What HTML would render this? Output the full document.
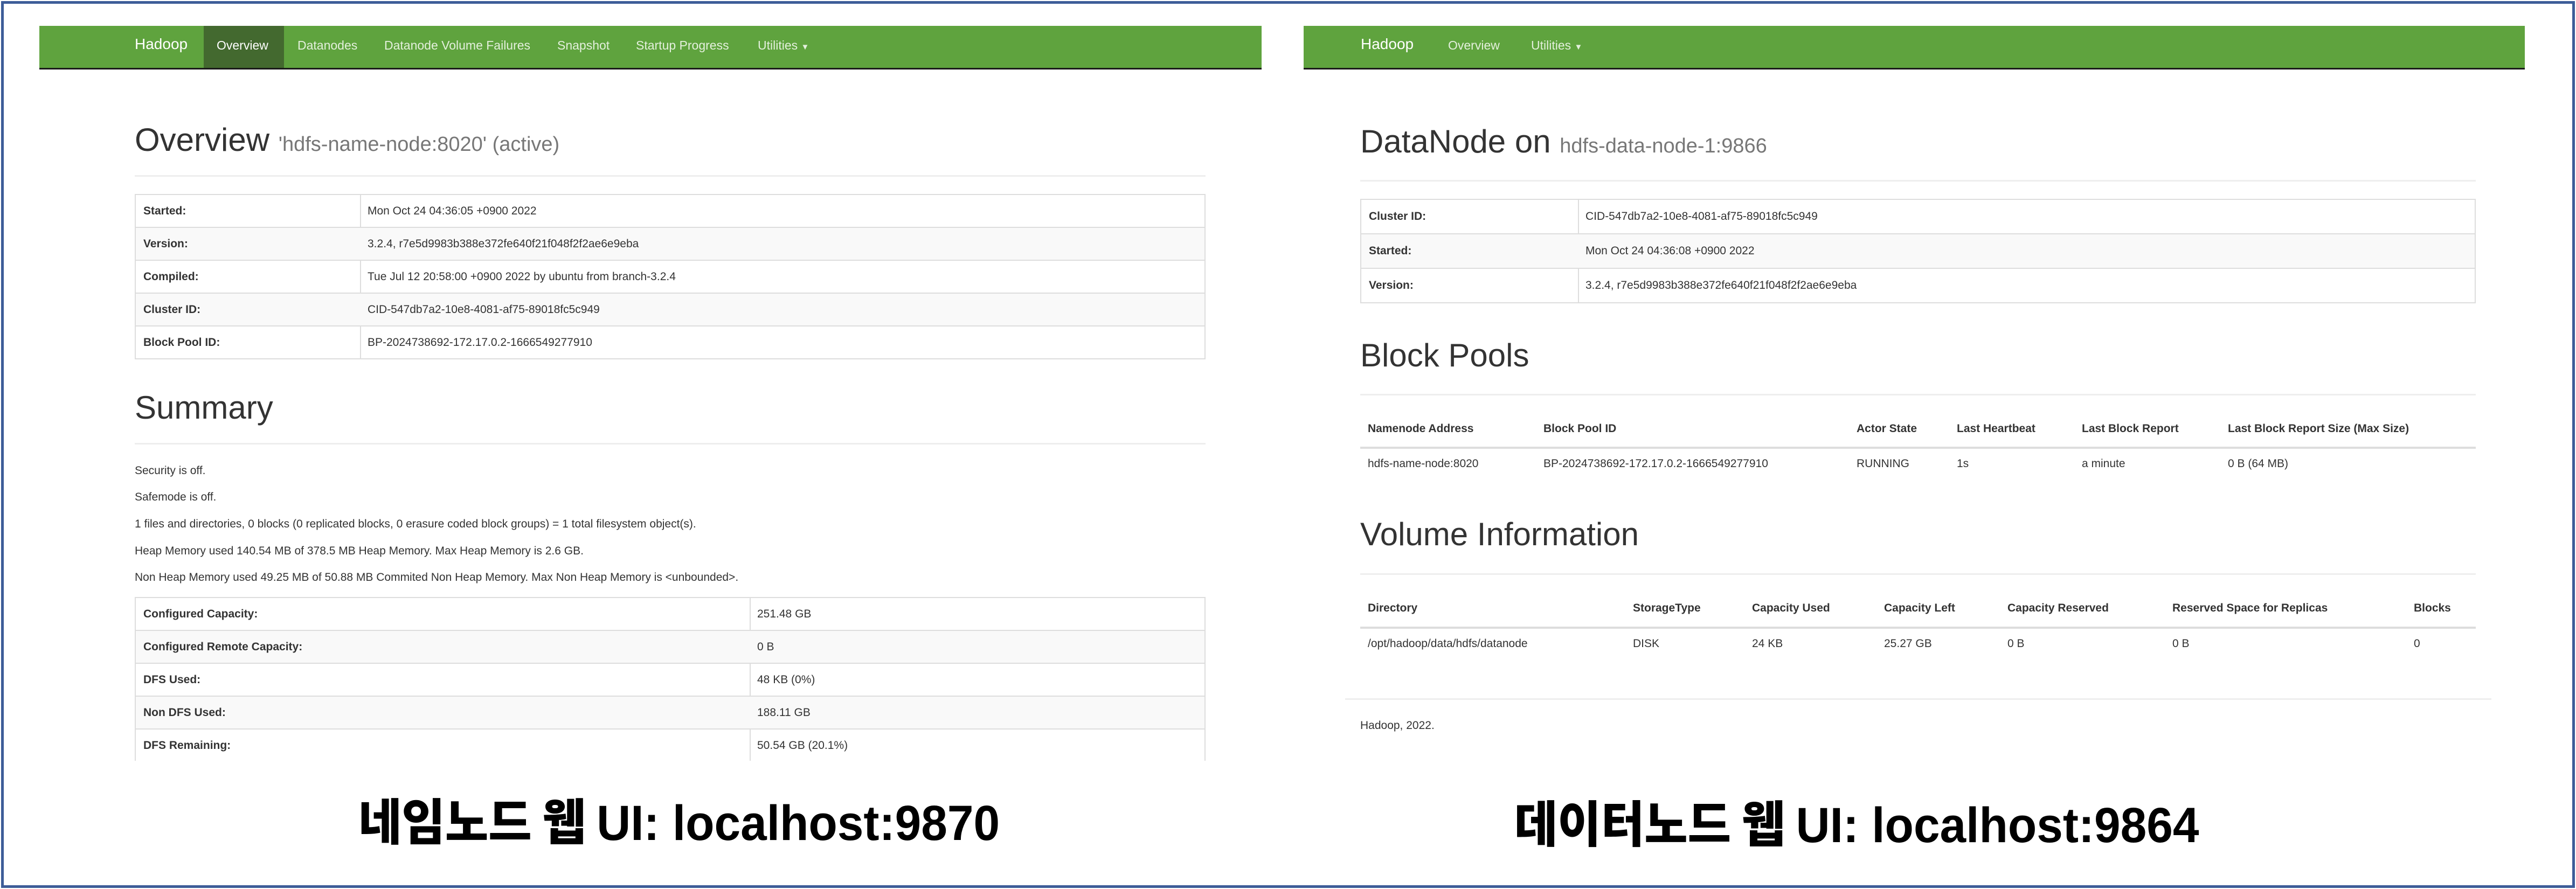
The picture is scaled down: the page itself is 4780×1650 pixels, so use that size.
<!DOCTYPE html>
<html><head><meta charset="utf-8"><style>
*{margin:0;padding:0;box-sizing:border-box}
body{width:4780px;height:1650px;background:#fff;position:relative;overflow:hidden;font-family:"Liberation Sans","Noto Sans CJK KR",sans-serif;color:#333}
.a{position:absolute;white-space:nowrap}
.frame{position:absolute;left:2px;top:2px;width:4776px;height:1646px;border:5px solid #3d5d98}
.nav{position:absolute;height:81px;background:#5fa33e;border-bottom:3px solid #1a1a1a}
.brand{font-size:28px;color:#fff;top:66px}
.ni{font-size:23px;color:#e4f0dd;top:71px}
.act{position:absolute;background:#43692f;top:48px;height:78px}
.h1{font-size:60px;color:#333}
.h1 small{font-size:38px;color:#777}
.hr{position:absolute;height:3px;background:#eee}
.tb{position:absolute;border:2px solid #ddd;border-bottom:none}
.tr{position:relative;border-bottom:2px solid #ddd;font-size:21px}
.tr:nth-child(odd){background:#f9f9f9}
.tr span{position:absolute;top:50%;transform:translateY(-50%);white-space:nowrap}
.tr .l{left:14px;font-weight:bold}
.col{position:absolute;top:0;bottom:0;width:2px;background:#ddd}
.p{font-size:21px;left:250px}
.th{font-size:21px;font-weight:bold}
.td{font-size:21px}
.cap{font-family:"Noto Sans CJK KR","Liberation Sans",sans-serif;font-weight:900;font-size:92px;color:#000;line-height:1;transform-origin:0 0}
.cap b{font-family:"Liberation Sans",sans-serif;font-weight:bold}
</style></head><body>
<div class="frame"></div>

<!-- LEFT -->
<div class="nav" style="left:73px;top:48px;width:2268px"></div>
<div class="act" style="left:378px;width:149px"></div>
<div class="a brand" style="left:250px">Hadoop</div>
<div class="a ni" style="left:402px;color:#fff">Overview</div>
<div class="a ni" style="left:552px">Datanodes</div>
<div class="a ni" style="left:713px">Datanode Volume Failures</div>
<div class="a ni" style="left:1034px">Snapshot</div>
<div class="a ni" style="left:1180px">Startup Progress</div>
<div class="a ni" style="left:1406px">Utilities <span style="font-size:15px">▼</span></div>

<div class="a h1" style="left:250px;top:225px">Overview <small>'hdfs-name-node:8020' (active)</small></div>
<div class="hr" style="left:250px;top:325px;width:1987px"></div>
<div class="tb" style="left:250px;top:360px;width:1987px">
<div class="col" style="left:416px"></div>
<div class="tr" style="height:61px"><span class="l">Started:</span><span style="left:430px">Mon Oct 24 04:36:05 +0900 2022</span></div>
<div class="tr" style="height:61px"><span class="l">Version:</span><span style="left:430px">3.2.4, r7e5d9983b388e372fe640f21f048f2f2ae6e9eba</span></div>
<div class="tr" style="height:61px"><span class="l">Compiled:</span><span style="left:430px">Tue Jul 12 20:58:00 +0900 2022 by ubuntu from branch-3.2.4</span></div>
<div class="tr" style="height:61px"><span class="l">Cluster ID:</span><span style="left:430px">CID-547db7a2-10e8-4081-af75-89018fc5c949</span></div>
<div class="tr" style="height:61px"><span class="l">Block Pool ID:</span><span style="left:430px">BP-2024738692-172.17.0.2-1666549277910</span></div>
</div>

<div class="a h1" style="left:250px;top:722px">Summary</div>
<div class="hr" style="left:250px;top:822px;width:1987px"></div>
<div class="a p" style="top:862px">Security is off.</div>
<div class="a p" style="top:911px">Safemode is off.</div>
<div class="a p" style="top:961px">1 files and directories, 0 blocks (0 replicated blocks, 0 erasure coded block groups) = 1 total filesystem object(s).</div>
<div class="a p" style="top:1011px">Heap Memory used 140.54 MB of 378.5 MB Heap Memory. Max Heap Memory is 2.6 GB.</div>
<div class="a p" style="top:1060px">Non Heap Memory used 49.25 MB of 50.88 MB Commited Non Heap Memory. Max Non Heap Memory is &lt;unbounded&gt;.</div>
<div class="tb" style="left:250px;top:1108px;width:1987px;height:304px;overflow:hidden">
<div class="col" style="left:1139px"></div>
<div class="tr" style="height:61px"><span class="l">Configured Capacity:</span><span style="left:1153px">251.48 GB</span></div>
<div class="tr" style="height:61px"><span class="l">Configured Remote Capacity:</span><span style="left:1153px">0 B</span></div>
<div class="tr" style="height:61px"><span class="l">DFS Used:</span><span style="left:1153px">48 KB (0%)</span></div>
<div class="tr" style="height:61px"><span class="l">Non DFS Used:</span><span style="left:1153px">188.11 GB</span></div>
<div class="tr" style="height:61px"><span class="l">DFS Remaining:</span><span style="left:1153px">50.54 GB (20.1%)</span></div>
</div>

<div class="a cap" style="left:665px;top:1474px;transform:scaleX(0.95)">네임노드 웹 <b>UI: localhost:9870</b></div>

<!-- RIGHT -->
<div class="nav" style="left:2419px;top:48px;width:2266px"></div>
<div class="a brand" style="left:2525px">Hadoop</div>
<div class="a ni" style="left:2687px">Overview</div>
<div class="a ni" style="left:2841px">Utilities <span style="font-size:15px">▼</span></div>

<div class="a h1" style="left:2524px;top:228px">DataNode on <small>hdfs-data-node-1:9866</small></div>
<div class="hr" style="left:2524px;top:334px;width:2070px"></div>
<div class="tb" style="left:2524px;top:369px;width:2070px">
<div class="col" style="left:402px"></div>
<div class="tr" style="height:64px"><span class="l">Cluster ID:</span><span style="left:416px">CID-547db7a2-10e8-4081-af75-89018fc5c949</span></div>
<div class="tr" style="height:64px"><span class="l">Started:</span><span style="left:416px">Mon Oct 24 04:36:08 +0900 2022</span></div>
<div class="tr" style="height:64px"><span class="l">Version:</span><span style="left:416px">3.2.4, r7e5d9983b388e372fe640f21f048f2f2ae6e9eba</span></div>
</div>

<div class="a h1" style="left:2524px;top:625px">Block Pools</div>
<div class="hr" style="left:2524px;top:731px;width:2070px"></div>
<div class="a th" style="left:2538px;top:784px">Namenode Address</div>
<div class="a th" style="left:2864px;top:784px">Block Pool ID</div>
<div class="a th" style="left:3445px;top:784px">Actor State</div>
<div class="a th" style="left:3631px;top:784px">Last Heartbeat</div>
<div class="a th" style="left:3863px;top:784px">Last Block Report</div>
<div class="a th" style="left:4134px;top:784px">Last Block Report Size (Max Size)</div>
<div class="hr" style="left:2524px;top:829px;width:2070px;height:4px;background:#ddd"></div>
<div class="a td" style="left:2538px;top:849px">hdfs-name-node:8020</div>
<div class="a td" style="left:2864px;top:849px">BP-2024738692-172.17.0.2-1666549277910</div>
<div class="a td" style="left:3445px;top:849px">RUNNING</div>
<div class="a td" style="left:3631px;top:849px">1s</div>
<div class="a td" style="left:3863px;top:849px">a minute</div>
<div class="a td" style="left:4134px;top:849px">0 B (64 MB)</div>

<div class="a h1" style="left:2524px;top:957px">Volume Information</div>
<div class="hr" style="left:2524px;top:1064px;width:2070px"></div>
<div class="a th" style="left:2538px;top:1117px">Directory</div>
<div class="a th" style="left:3030px;top:1117px">StorageType</div>
<div class="a th" style="left:3251px;top:1117px">Capacity Used</div>
<div class="a th" style="left:3496px;top:1117px">Capacity Left</div>
<div class="a th" style="left:3725px;top:1117px">Capacity Reserved</div>
<div class="a th" style="left:4031px;top:1117px">Reserved Space for Replicas</div>
<div class="a th" style="left:4479px;top:1117px">Blocks</div>
<div class="hr" style="left:2524px;top:1163px;width:2070px;height:4px;background:#ddd"></div>
<div class="a td" style="left:2538px;top:1183px">/opt/hadoop/data/hdfs/datanode</div>
<div class="a td" style="left:3030px;top:1183px">DISK</div>
<div class="a td" style="left:3251px;top:1183px">24 KB</div>
<div class="a td" style="left:3496px;top:1183px">25.27 GB</div>
<div class="a td" style="left:3725px;top:1183px">0 B</div>
<div class="a td" style="left:4031px;top:1183px">0 B</div>
<div class="a td" style="left:4479px;top:1183px">0</div>

<div class="hr" style="left:2496px;top:1296px;width:2127px"></div>
<div class="a td" style="left:2524px;top:1335px">Hadoop, 2022.</div>

<div class="a cap" style="left:2810px;top:1478px;transform:scaleX(0.95)">데이터노드 웹 <b>UI: localhost:9864</b></div>
</body></html>
